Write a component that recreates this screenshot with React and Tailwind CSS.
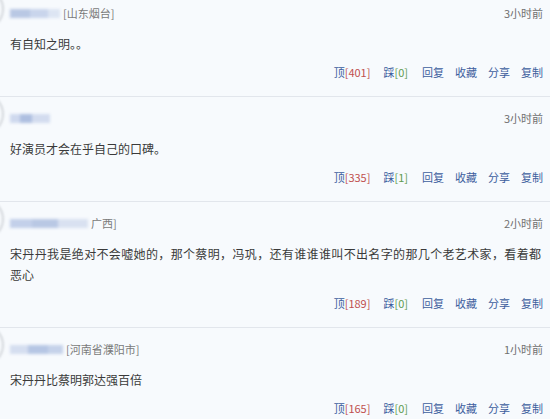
import React from "react";

const comments = [
  {
    segs: [
      ["w-[20px]", "bg-[#b9c8e4]"],
      ["w-[18px]", "bg-[#c9d5ec]"],
      ["w-[12px]", "bg-[#dde5f3]"],
    ],
    loc: "[山东烟台]",
    time: "3小时前",
    lines: [{ t: "有自知之明。。" }],
    up: 401,
    down: 0,
  },
  {
    segs: [
      ["w-[10px]", "bg-[#cfd9ee]"],
      ["w-[12px]", "bg-[#aebfe0]"],
      ["w-[18px]", "bg-[#d3dcef]"],
    ],
    loc: "",
    time: "3小时前",
    lines: [{ t: "好演员才会在乎自己的口碑。" }],
    up: 335,
    down: 1,
  },
  {
    segs: [
      ["w-[22px]", "bg-[#c3d0ea]"],
      ["w-[26px]", "bg-[#b9c8e4]"],
      ["w-[30px]", "bg-[#d9e1f1]"],
    ],
    loc: "广西]",
    time: "2小时前",
    lines: [
      {
        t: "宋丹丹我是绝对不会嘘她的，那个蔡明，冯巩，还有谁谁谁叫不出名字的那几个老艺术家，看着都",
        j: true,
      },
      { t: "恶心" },
    ],
    up: 189,
    down: 0,
  },
  {
    segs: [
      ["w-[18px]", "bg-[#d5def0]"],
      ["w-[20px]", "bg-[#b6c6e4]"],
      ["w-[15px]", "bg-[#c5d2ea]"],
    ],
    loc: "[河南省濮阳市]",
    time: "1小时前",
    lines: [{ t: "宋丹丹比蔡明郭达强百倍" }],
    up: 165,
    down: 0,
  },
];

function Comment({ c }) {
  return (
    <div className="relative pl-[10px] pr-[7px] pt-[11px] pb-[14px] border-b border-[#e2e6ec]">
      <div className="absolute left-[-40px] top-[-4px] w-[44px] h-[42px] rounded-full border-[2px] border-[#b0b4ba] opacity-50 blur-[0.8px]" />
      <div className="flex items-center justify-between h-[20px]">
        <div className="flex items-center">
          <div className="flex h-[9px] blur-[1.5px]">
            {c.segs.map((s, i) => (
              <div key={i} className={`${s[0]} ${s[1]} h-full`} />
            ))}
          </div>
          {c.loc && (
            <span className="ml-[3px] text-[11px] text-[#7a7a7a] leading-none">{c.loc}</span>
          )}
        </div>
        <span className="text-[11px] text-[#707070] leading-none">{c.time}</span>
      </div>
      <div className="mt-[10px] text-[12px] leading-[21px] text-[#3a3a3a]">
        {c.lines.map((l, i) => (
          <div key={i} className={l.j ? "text-justify [text-align-last:justify] pr-[2px]" : ""}>
            {l.t}
          </div>
        ))}
      </div>
      <div className="mt-[8px] h-[20px] flex items-center justify-end gap-[11px] text-[11px] leading-none text-[#3d5e9e]">
        <span>
          顶<span className="text-[#c0504f]">[{c.up}]</span>
        </span>
        <span className="ml-[2px]">
          踩<span className="text-[#5f9a4f]">[{c.down}]</span>
        </span>
        <span className="ml-[3px]">回复</span>
        <span>收藏</span>
        <span>分享</span>
        <span>复制</span>
      </div>
    </div>
  );
}

export default function App() {
  return (
    <div
      className="w-[550px] h-[419px] overflow-hidden bg-[#f7fafd]"
      style={{ fontFamily: '"Noto Sans CJK SC", "Noto Sans", sans-serif' }}
    >
      <div className="-mt-[8px]">
        {comments.map((c, i) => (
          <Comment key={i} c={c} />
        ))}
      </div>
    </div>
  );
}
